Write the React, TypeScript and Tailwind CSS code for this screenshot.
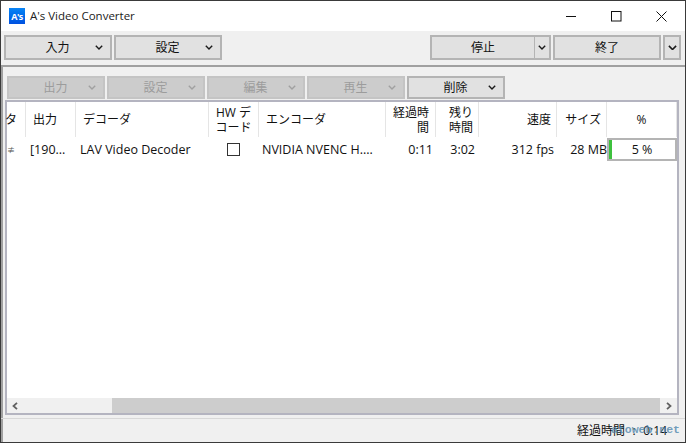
import React from 'react';

const font = { fontFamily: '"Open Sans", "Noto Sans CJK JP", sans-serif' };

function Chevron({ color = '#1a1a1a', size = 8 }: { color?: string; size?: number }) {
  return (
    <svg width={size} height={size * 0.625} viewBox="0 0 8 5" fill="none">
      <path d="M0.8 0.8 L4 4 L7.2 0.8" stroke={color} strokeWidth="1.4" />
    </svg>
  );
}

function DropButton({ label, width, disabled }: { label: string; width: string; disabled?: boolean }) {
  return (
    <div
      className={`${width} flex h-full items-center border-2 ${
        disabled ? 'border-[#c4c4c4] bg-[#cccccc] text-[#9c9c9c]' : 'border-[#b4b4b4] bg-[#e1e1e1] text-[#111]'
      }`}
    >
      <span className="flex-1 pl-[18px] text-center">{label}</span>
      <span className="flex w-[19px] justify-center pr-[3px]">
        <Chevron color={disabled ? '#a0a0a0' : '#1a1a1a'} />
      </span>
    </div>
  );
}

const cols = [
  { label: ['タ'], w: 'w-[19px]', align: 'justify-end pr-[8px]' },
  { label: ['出力'], w: 'w-[50px]', align: 'justify-start pl-[7px]' },
  { label: ['デコーダ'], w: 'w-[133px]', align: 'justify-start pl-[7px]' },
  { label: ['HW デ', 'コード'], w: 'w-[50px]', align: 'justify-center text-center' },
  { label: ['エンコーダ'], w: 'w-[127px]', align: 'justify-start pl-[7px]' },
  { label: ['経過時', '間'], w: 'w-[50px]', align: 'justify-end text-right pr-[6px]' },
  { label: ['残り', '時間'], w: 'w-[43px]', align: 'justify-end text-right pr-[5px]' },
  { label: ['速度'], w: 'w-[78px]', align: 'justify-end pr-[5px]' },
  { label: ['サイズ'], w: 'w-[50px]', align: 'justify-end pr-[5px]' },
  { label: ['%'], w: 'w-[70px]', align: 'justify-center' },
];

export default function App() {
  return (
    <div
      className="flex h-[443px] w-[686px] flex-col overflow-hidden border border-[#3a3a3a] bg-[#f0f0f0] text-[12.5px] leading-[15px] text-[#111]"
      style={font}
    >
      {/* title bar */}
      <div className="flex h-[30px] shrink-0 items-center bg-white">
        <div className="ml-[8px] flex h-[16px] w-[16px] items-center justify-center bg-gradient-to-b from-[#0a84f5] to-[#0050e0] text-[9px] font-bold leading-none tracking-tighter text-white">
          A's
        </div>
        <span className="mb-[1px] ml-[5px] text-[11.5px] text-[#222]">A's Video Converter</span>
        <div className="ml-auto flex items-center">
          <svg width="11" height="11" viewBox="0 0 11 11" className="mr-[34px]">
            <path d="M0 5.5 H10" stroke="#111" strokeWidth="1" />
          </svg>
          <svg width="11" height="11" viewBox="0 0 11 11" className="mr-[34px]">
            <rect x="0.5" y="0.5" width="9.5" height="9.5" fill="none" stroke="#111" strokeWidth="1" />
          </svg>
          <svg width="11" height="11" viewBox="0 0 11 11" className="mr-[18px]">
            <path d="M0.5 0.5 L10.5 10.5 M10.5 0.5 L0.5 10.5" stroke="#111" strokeWidth="1" />
          </svg>
        </div>
      </div>

      {/* main toolbar */}
      <div className="flex h-[34px] shrink-0 items-start gap-[2px] pl-[3px] pr-[4px] pt-[4px] text-[12px]">
        <div className="flex h-[25px] gap-[2px]">
          <DropButton label="入力" width="w-[108px]" />
          <DropButton label="設定" width="w-[108px]" />
        </div>
        <div className="ml-auto flex h-[25px] gap-[2px]">
          <div className="flex h-full w-[121px] border-2 border-[#b4b4b4] bg-[#e1e1e1]">
            <span className="flex flex-1 items-center justify-center">停止</span>
            <span className="flex w-[15px] items-center justify-center border-l border-[#b4b4b4]">
              <Chevron />
            </span>
          </div>
          <div className="flex h-full w-[108px] items-center justify-center border-2 border-[#b4b4b4] bg-[#e1e1e1]">
            終了
          </div>
          <div className="flex h-full w-[18px] items-center justify-center border-2 border-[#b4b4b4] bg-[#e1e1e1]">
            <Chevron size={9} />
          </div>
        </div>
      </div>

      {/* panel */}
      <div className="flex min-h-0 flex-1 flex-col border-t-2 border-l-2 border-[#a0a0a0] pl-[2px]">
        <div className="ml-[2px] mt-[9px] flex h-[23px] shrink-0 gap-[2px] text-[12px]">
          <DropButton label="出力" width="w-[98px]" disabled />
          <DropButton label="設定" width="w-[98px]" disabled />
          <DropButton label="編集" width="w-[98px]" disabled />
          <DropButton label="再生" width="w-[98px]" disabled />
          <DropButton label="削除" width="w-[98px]" />
        </div>

        {/* list */}
        <div className="mt-[1px] flex h-[315px] w-[674px] shrink-0 flex-col border-2 border-[#b4b4c0] bg-white">
          <div className="flex h-[35px] shrink-0 text-[12px]">
            {cols.map((c) => (
              <div
                key={c.label.join('')}
                className={`${c.w} flex shrink-0 items-center border-r border-[#e5e5e5] leading-[15px] ${c.align}`}
              >
                <span>
                  {c.label.map((line) => (
                    <span key={line} className="block h-[15px] whitespace-nowrap">
                      {line}
                    </span>
                  ))}
                </span>
              </div>
            ))}
          </div>
          <div className="flex h-[25px] shrink-0 items-center">
            <div className="w-[19px] shrink-0 pr-[12px] text-right text-[8px] text-[#555]">≢</div>
            <div className="w-[50px] shrink-0 pl-[4px]">[190...</div>
            <div className="w-[133px] shrink-0 pl-[4px]">LAV Video Decoder</div>
            <div className="flex w-[50px] shrink-0 justify-center pr-[1px]">
              <div className="h-[13px] w-[13px] border border-[#333] bg-white" />
            </div>
            <div className="w-[127px] shrink-0 pl-[3px]">NVIDIA NVENC H....</div>
            <div className="w-[50px] shrink-0 pr-[3px] text-right">0:11</div>
            <div className="w-[43px] shrink-0 pr-[4px] text-right">3:02</div>
            <div className="w-[78px] shrink-0 pr-[3px] text-right">312 fps</div>
            <div className="w-[50px] shrink-0 text-right">28 MB</div>
            <div className="flex h-[23px] w-[70px] shrink-0 items-center justify-center border-2 border-[#b4b4b4] bg-[linear-gradient(to_right,#3ec13e_3px,#ffffff_3px)]">
              5 %
            </div>
          </div>
          <div className="flex-1" />
          <div className="flex h-[15px] shrink-0 items-center bg-[#f0f0f0]">
            <span className="flex w-[17px] justify-center">
              <svg width="6" height="8" viewBox="0 0 6 8" fill="none">
                <path d="M5 0.8 L1.5 4 L5 7.2" stroke="#606060" strokeWidth="1.8" />
              </svg>
            </span>
            <div className="ml-[88px] h-full w-[550px] bg-[#cdcdcd]" />
            <span className="ml-auto flex w-[17px] justify-center">
              <svg width="6" height="8" viewBox="0 0 6 8" fill="none">
                <path d="M1 0.8 L4.5 4 L1 7.2" stroke="#606060" strokeWidth="1.8" />
              </svg>
            </span>
          </div>
        </div>

        <div className="-ml-[4px] mt-[3px] h-[1px] shrink-0 bg-[#d8d8d8]" />
        <div className="relative flex flex-1 items-center justify-end text-[12px]">
          <span className="mr-[18px] [word-spacing:4.5px]">経過時間 : 0:14</span>
          <span
            className="absolute right-[5px] top-[3px] text-[11.5px] font-bold text-[#4f86ad]/80"
            style={{ fontFamily: '"Liberation Mono", monospace' }}
          >
            atoweb.net
          </span>
        </div>
      </div>
    </div>
  );
}
